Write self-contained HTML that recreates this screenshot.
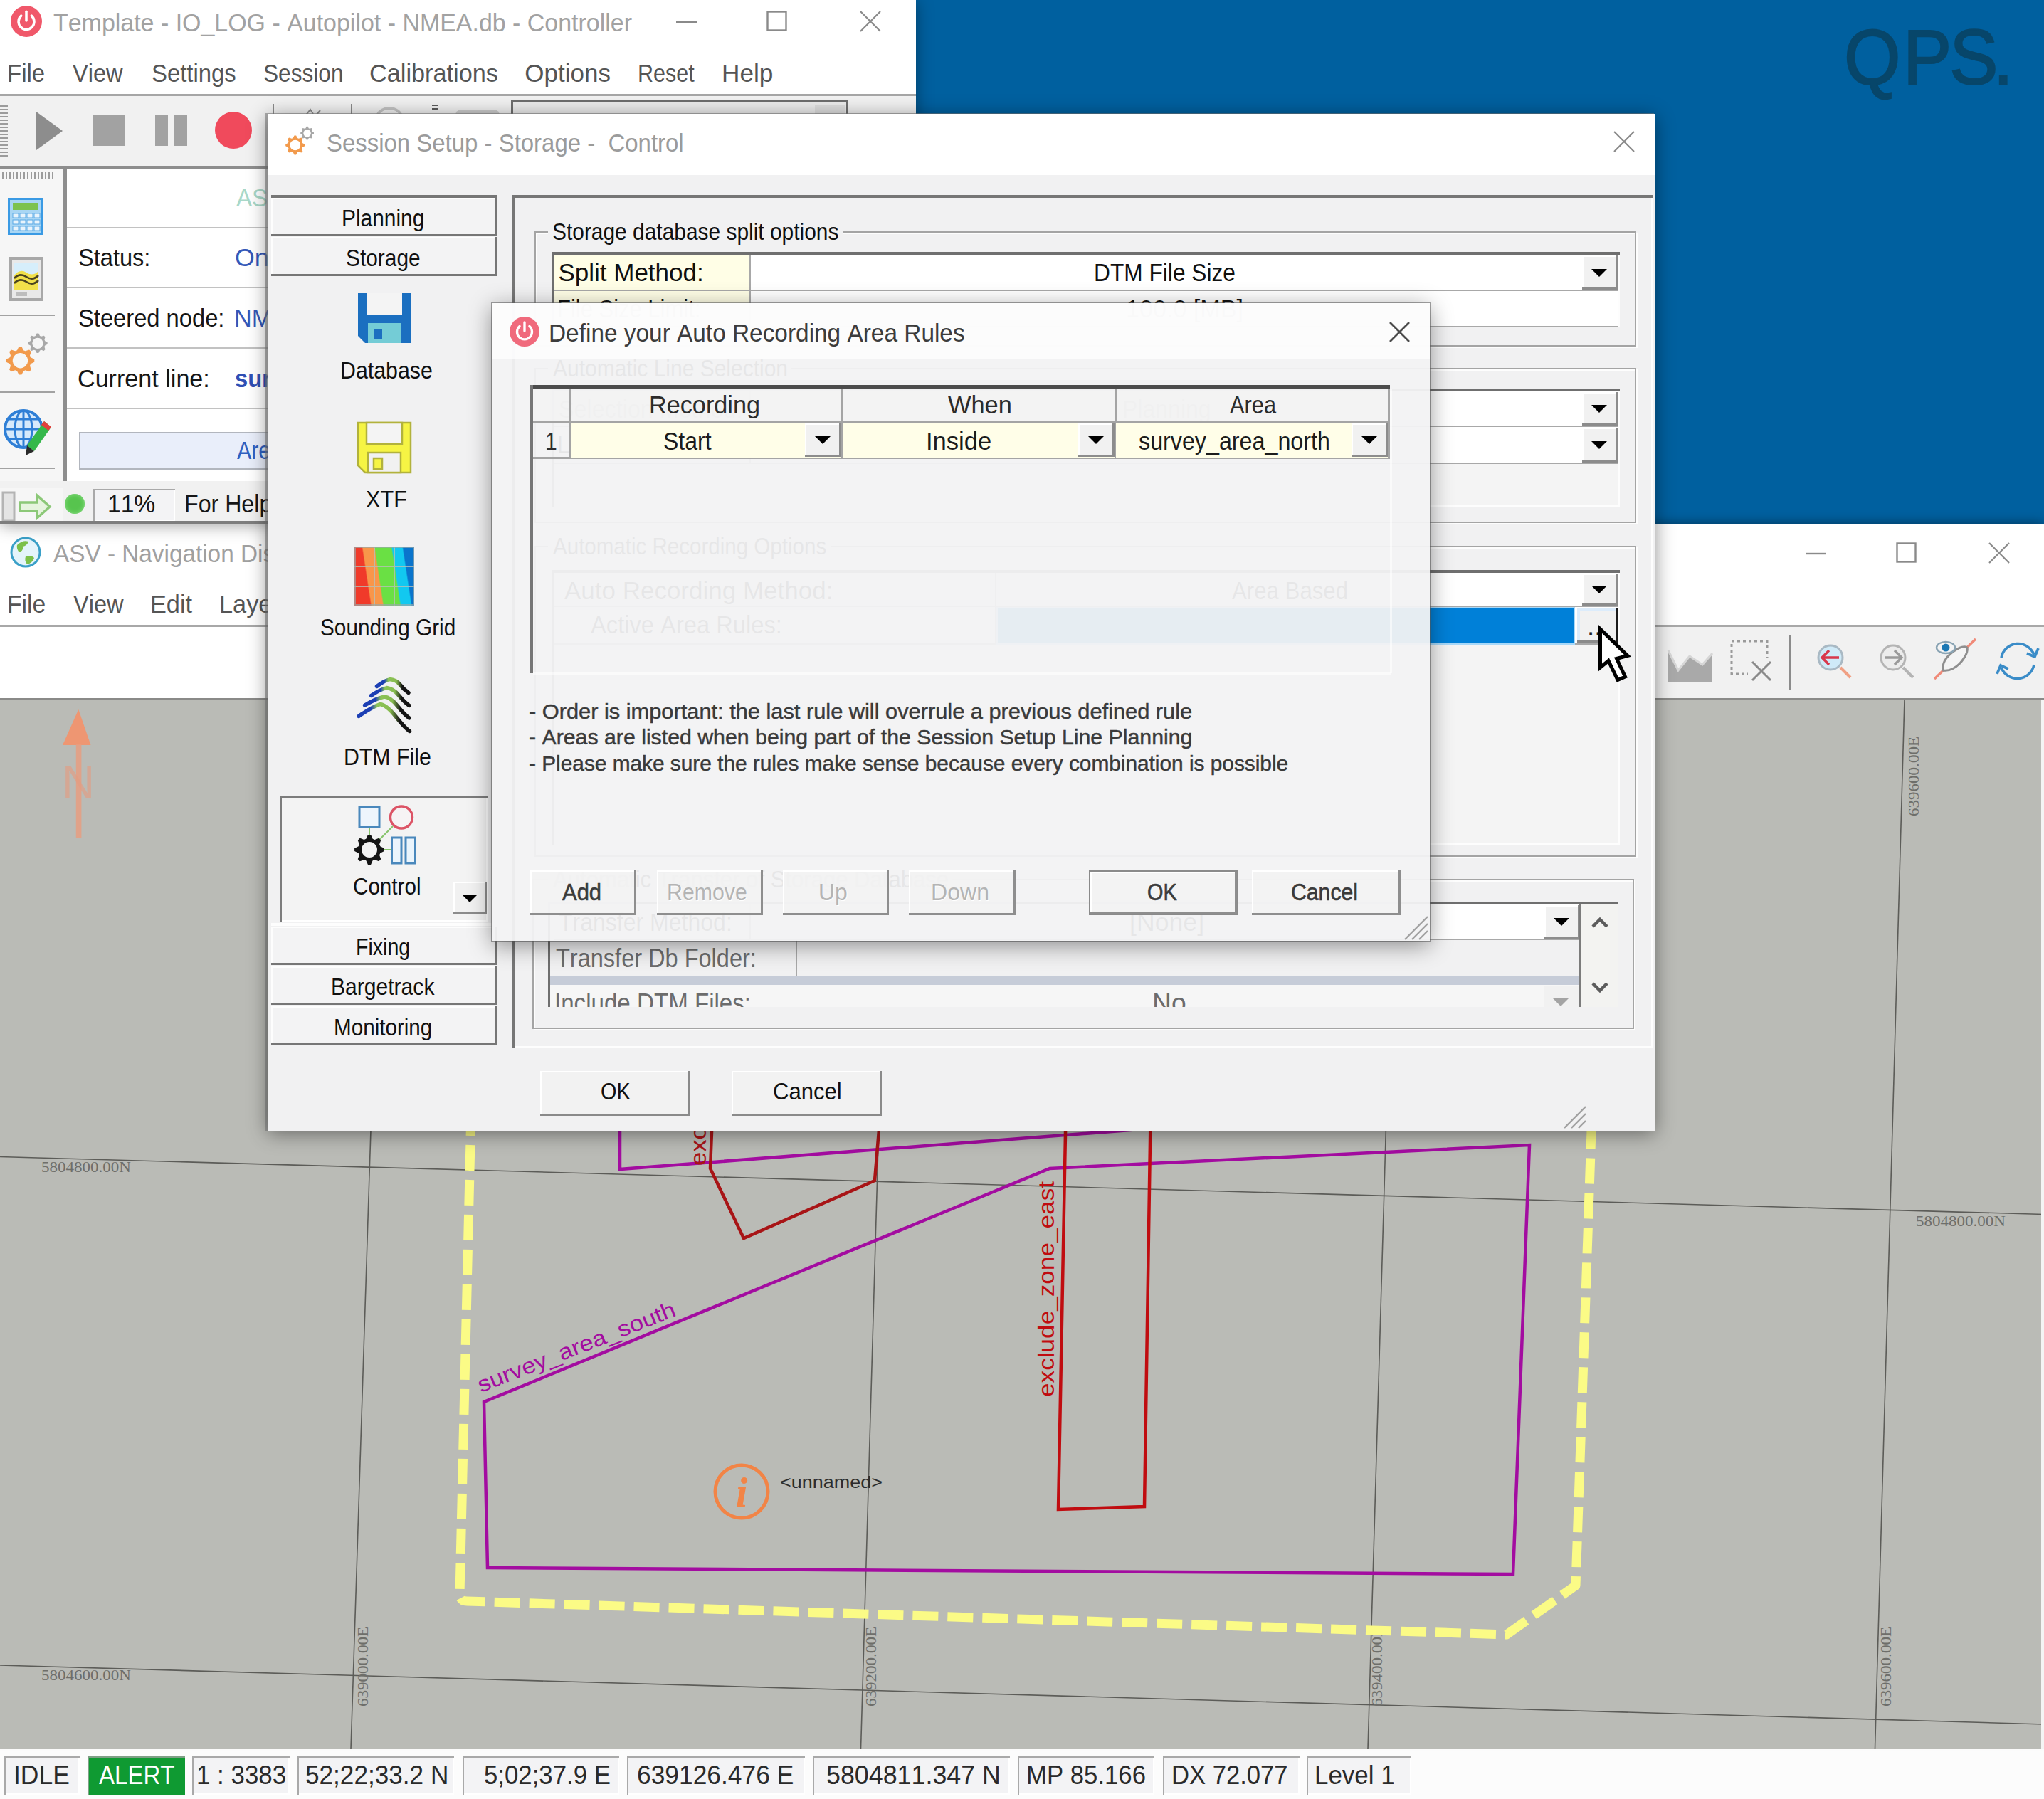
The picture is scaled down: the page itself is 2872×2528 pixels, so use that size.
<!DOCTYPE html>
<html lang="en">
<head>
<meta charset="utf-8">
<title>Session Setup - Storage - Control</title>
<style>
html,body{margin:0;padding:0;background:#fff;}
body{width:2872px;height:2528px;overflow:hidden;}
#root{position:relative;width:2872px;height:2528px;overflow:hidden;background:#fff;
 font-family:"Liberation Sans",sans-serif;font-kerning:none;}
.a{position:absolute;box-sizing:border-box;}
.t{position:absolute;white-space:pre;line-height:1;transform-origin:0 0;}
svg{overflow:visible;}
</style>
</head>
<body>
<div id="root">
<div id="desktop">
<div class="a" style="left:1287px;top:0px;width:1585px;height:736px;background:#00609f;"></div>
<span class="t" id="logo" style="left:2591.26px;top:24.88px;font-size:110px;color:#07466a;-webkit-text-stroke:2.2px #07466a;transform:scaleX(0.93);"><span style="letter-spacing:3.79px">Q</span><span style="letter-spacing:-3.44px">P</span><span style="letter-spacing:-7.35px">S</span>.</span>
</div>
<div id="nav-window">
<div class="a" style="left:0px;top:736px;width:2872px;height:1792px;background:#ffffff;box-shadow:0 0 16px rgba(0,0,0,.45);"></div>
<svg class="a" style="left:14px;top:754px;" width="44" height="44" viewBox="0 0 44 44" ><circle cx="22" cy="22" r="20" fill="#e4f4fb" stroke="#3aa0c8" stroke-width="3"/><path d="M10 12 q8 -8 16 -5 q-2 6 -8 7 q1 6 -5 8 q-4 -4 -3 -10z" fill="#7cc04a"/><path d="M22 28 q8 -3 12 2 q-3 8 -10 9 q-4 -5 -2 -11z" fill="#7cc04a"/></svg>
<span class="t" style="left:74.93px;top:760.37px;font-size:35px;color:#a0a0a0;transform:scaleX(0.9518);">ASV - Navigation Display</span>
<svg class="a" style="left:2537px;top:763px;" width="28" height="28" viewBox="0 0 28 28" ><path d="M0 15 H28" stroke="#8a8a8a" stroke-width="2.4" fill="none"/></svg>
<svg class="a" style="left:2664px;top:762px;" width="30" height="30" viewBox="0 0 30 30" ><rect x="1.5" y="1.5" width="26" height="26" fill="none" stroke="#8a8a8a" stroke-width="2.4"/></svg>
<svg class="a" style="left:2794px;top:762px;" width="30" height="30" viewBox="0 0 30 30" ><path d="M1 1 L29 29 M29 1 L1 29" stroke="#8a8a8a" stroke-width="2.2" fill="none"/></svg>
<span class="t" style="left:10.24px;top:831.37px;font-size:35px;color:#555555;transform:scaleX(0.9620);">File</span>
<span class="t" style="left:102.87px;top:831.37px;font-size:35px;color:#555555;transform:scaleX(0.9311);">View</span>
<span class="t" style="left:211.19px;top:831.37px;font-size:35px;color:#555555;transform:scaleX(0.9792);">Edit</span>
<span class="t" style="left:308.18px;top:831.37px;font-size:35px;color:#555555;transform:scaleX(0.9811);">Layers</span>
<div class="a" style="left:0px;top:878px;width:2872px;height:3px;background:#a8a8a8;"></div>
<div class="a" style="left:0px;top:881px;width:2872px;height:100px;background:#f1f1f1;"></div>
<div class="a" style="left:0px;top:881px;width:400px;height:100px;background:#ffffff;"></div>
<svg class="a" style="left:2340px;top:896px;" width="70" height="66" viewBox="0 0 70 66" ><path d="M4 4 V62 H66 V22 L52 38 L34 26 L18 46 L4 18 Z" fill="#a9a9a9"/><path d="M4 18 L18 46 L34 26 L52 38 L66 22" fill="none" stroke="#d6d6d6" stroke-width="3"/></svg>
<svg class="a" style="left:2430px;top:898px;" width="64" height="62" viewBox="0 0 64 62" ><rect x="3" y="3" width="50" height="46" fill="none" stroke="#9a9a9a" stroke-width="3" stroke-dasharray="4 4"/><rect x="26" y="26" width="38" height="36" fill="#f1f1f1"/><path d="M32 32 L58 58 M58 32 L32 58" stroke="#8a8a8a" stroke-width="3" fill="none"/></svg>
<div class="a" style="left:2514px;top:892px;width:2px;height:77px;background:#8c8c8c;"></div>
<svg class="a" style="left:2548px;top:900px;" width="60" height="60" viewBox="0 0 60 60" ><circle cx="24" cy="24" r="17" fill="#cfeaf8" stroke="#a9b9c4" stroke-width="3"/><path d="M38 38 L52 52" stroke="#f0a084" stroke-width="4"/><path d="M36 24 H13 M22 14 L12 24 L22 34" stroke="#d8384c" stroke-width="3.4" fill="none"/></svg>
<svg class="a" style="left:2636px;top:900px;" width="60" height="60" viewBox="0 0 60 60" ><circle cx="24" cy="24" r="17" fill="#ececec" stroke="#b4b4b4" stroke-width="3"/><path d="M38 38 L52 52" stroke="#b4b4b4" stroke-width="4"/><path d="M12 24 H35 M26 14 L36 24 L26 34" stroke="#9a9a9a" stroke-width="3.4" fill="none"/></svg>
<svg class="a" style="left:2710px;top:892px;" width="70" height="72" viewBox="0 0 70 72" ><path d="M8 62 L66 6" stroke="#f08a78" stroke-width="3.4"/><path d="M20 50 Q18 36 34 24 Q48 14 54 18 Q56 26 44 40 Q32 52 20 50 Z" fill="#f4f4f4" stroke="#8f8f8f" stroke-width="3"/><ellipse cx="24" cy="18" rx="13" ry="8" fill="#f4f4f4" stroke="#8aa4b4" stroke-width="2.4"/><circle cx="24" cy="18" r="5.5" fill="#1b78b4"/></svg>
<svg class="a" style="left:2802px;top:896px;" width="66" height="66" viewBox="0 0 66 66" ><path d="M10 28 A24 24 0 0 1 56 24" fill="none" stroke="#3a8cc8" stroke-width="3.6"/><path d="M56 38 A24 24 0 0 1 10 42" fill="none" stroke="#3a8cc8" stroke-width="3.6"/><path d="M46 22 L57 27 L62 15" fill="none" stroke="#3a8cc8" stroke-width="3.6"/><path d="M20 44 L9 39 L4 51" fill="none" stroke="#3a8cc8" stroke-width="3.6"/></svg>
<div class="a" style="left:0px;top:981px;width:2872px;height:4.5px;background:#8a8a88;"></div>
<div class="a" style="left:0px;top:983px;width:2872px;height:1475px;background:#babbb6;"></div>
<svg class="a" id="map" style="left:0;top:983px" width="2872" height="1475" viewBox="0 983 2872 1475" font-family="'Liberation Sans',sans-serif"><line x1="0" y1="1625.5" x2="2872" y2="1706.5" stroke="#5c5c58" stroke-width="1.6"/><line x1="0" y1="2340" x2="2872" y2="2423" stroke="#5c5c58" stroke-width="1.6"/><line x1="540.5" y1="983" x2="493" y2="2458" stroke="#5c5c58" stroke-width="1.6"/><line x1="1252" y1="983" x2="1209.5" y2="2458" stroke="#5c5c58" stroke-width="1.6"/><line x1="1965" y1="983" x2="1922" y2="2458" stroke="#5c5c58" stroke-width="1.6"/><line x1="2676" y1="983" x2="2634.5" y2="2458" stroke="#5c5c58" stroke-width="1.6"/><text x="58" y="1647" textLength="126" lengthAdjust="spacingAndGlyphs" style="font-family:'Liberation Serif',serif;font-size:21px;fill:#6e6e6a">5804800.00N</text><text x="58" y="2361" textLength="126" lengthAdjust="spacingAndGlyphs" style="font-family:'Liberation Serif',serif;font-size:21px;fill:#6e6e6a">5804600.00N</text><text x="2692" y="1723" textLength="126" lengthAdjust="spacingAndGlyphs" style="font-family:'Liberation Serif',serif;font-size:21px;fill:#6e6e6a">5804800.00N</text><text transform="translate(517 2398) rotate(-90)" textLength="112" lengthAdjust="spacingAndGlyphs" style="font-family:'Liberation Serif',serif;font-size:21px;fill:#6e6e6a">639000.00E</text><text transform="translate(1231 2398) rotate(-90)" textLength="112" lengthAdjust="spacingAndGlyphs" style="font-family:'Liberation Serif',serif;font-size:21px;fill:#6e6e6a">639200.00E</text><text transform="translate(1942 2398) rotate(-90)" textLength="112" lengthAdjust="spacingAndGlyphs" style="font-family:'Liberation Serif',serif;font-size:21px;fill:#6e6e6a">639400.00E</text><text transform="translate(2657 2398) rotate(-90)" textLength="112" lengthAdjust="spacingAndGlyphs" style="font-family:'Liberation Serif',serif;font-size:21px;fill:#6e6e6a">639600.00E</text><text transform="translate(2696 1147) rotate(-90)" textLength="112" lengthAdjust="spacingAndGlyphs" style="font-family:'Liberation Serif',serif;font-size:21px;fill:#6e6e6a">639600.00E</text><path d="M662 1560 L646 2240 Q646 2250 656 2250 L2117 2297 L2214 2228 L2237 1560" fill="none" stroke="#fbfb86" stroke-width="13" stroke-dasharray="36 13" stroke-linejoin="round"/><path d="M871 1540 L871 1643 L1640 1584" fill="none" stroke="#a30ca0" stroke-width="4.5"/><path d="M680 1970 L685 2203 L2126 2212 L2149 1609 L1475 1642 Z" fill="none" stroke="#a30ca0" stroke-width="4.5" stroke-linejoin="miter"/><path d="M1002 1540 L998 1642 L1045 1740 L1229 1659 L1239 1540" fill="none" stroke="#a81416" stroke-width="4.5"/><path d="M1498 1540 L1487 2121 L1608 2117 L1617 1540" fill="none" stroke="#c00c10" stroke-width="4.5"/><text transform="translate(676 1957) rotate(-21.5)" textLength="296" lengthAdjust="spacingAndGlyphs" style="font-size:31px;fill:#a30ca0">survey_area_south</text><text transform="translate(1481 1963) rotate(-90)" textLength="303" lengthAdjust="spacingAndGlyphs" style="font-size:31px;fill:#c00c10">exclude_zone_east</text><text transform="translate(992 1638) rotate(-90)" textLength="303" lengthAdjust="spacingAndGlyphs" style="font-size:31px;fill:#a81416">exclude_zone_west</text><circle cx="1042" cy="2096" r="37" fill="none" stroke="#f28446" stroke-width="5"/><text x="1042" y="2117" text-anchor="middle" style="font-family:'Liberation Serif',serif;font-style:italic;font-weight:700;font-size:60px;fill:#f28446">i</text><text x="1096" y="2091" textLength="144" lengthAdjust="spacingAndGlyphs" style="font-size:24px;fill:#2c2c2c">&lt;unnamed&gt;</text><path d="M110.3 997 L127.5 1047 H88 Z" fill="#ee9672"/><rect x="106.8" y="1046" width="7.6" height="131" fill="#ea9c7e" opacity="0.8"/><text x="87" y="1120.5" textLength="46" lengthAdjust="spacingAndGlyphs" style="font-size:64px;fill:#e69c80" opacity="0.62">N</text></svg>
<div class="a" style="left:2868px;top:983px;width:4px;height:1475px;background:#f4f4f4;"></div>
<div class="a" style="left:0px;top:2458px;width:2872px;height:70px;background:#fcfcfc;"></div>
<div class="a" style="left:0px;top:2458px;width:2872px;height:3px;background:#fbfbfb;"></div>
<div class="a" style="left:6px;top:2468px;width:106px;height:54px;background:#f3f3f5;box-shadow:inset 2px 2px 0 #a9a9a9,inset -2px -2px 0 #ffffff;"></div>
<span class="t" style="left:18.74px;top:2476.53px;font-size:36px;color:#2a2a2a;transform:scaleX(0.9840);">IDLE</span>
<div class="a" style="left:123px;top:2468px;width:137px;height:54px;background:#0f9a32;box-shadow:inset 2px 2px 0 #7f9f86;"></div>
<span class="t" style="left:138.93px;top:2476.53px;font-size:36px;color:#ffffff;transform:scaleX(0.9172);">ALERT</span>
<div class="a" style="left:270px;top:2468px;width:137px;height:54px;background:#f3f3f5;box-shadow:inset 2px 2px 0 #a9a9a9,inset -2px -2px 0 #ffffff;"></div>
<span class="t" style="left:276.35px;top:2476.53px;font-size:36px;color:#2a2a2a;transform:scaleX(0.9696);">1 : 3383</span>
<div class="a" style="left:418px;top:2468px;width:220px;height:54px;background:#f3f3f5;box-shadow:inset 2px 2px 0 #a9a9a9,inset -2px -2px 0 #ffffff;"></div>
<span class="t" style="left:428.59px;top:2476.53px;font-size:36px;color:#2a2a2a;transform:scaleX(0.9763);">52;22;33.2 N</span>
<div class="a" style="left:650px;top:2468px;width:220px;height:54px;background:#f3f3f5;box-shadow:inset 2px 2px 0 #a9a9a9,inset -2px -2px 0 #ffffff;"></div>
<span class="t" style="left:679.61px;top:2476.53px;font-size:36px;color:#2a2a2a;transform:scaleX(0.9658);">5;02;37.9 E</span>
<div class="a" style="left:881px;top:2468px;width:250px;height:54px;background:#f3f3f5;box-shadow:inset 2px 2px 0 #a9a9a9,inset -2px -2px 0 #ffffff;"></div>
<span class="t" style="left:895.23px;top:2476.53px;font-size:36px;color:#2a2a2a;transform:scaleX(0.9824);">639126.476 E</span>
<div class="a" style="left:1142px;top:2468px;width:277px;height:54px;background:#f3f3f5;box-shadow:inset 2px 2px 0 #a9a9a9,inset -2px -2px 0 #ffffff;"></div>
<span class="t" style="left:1160.57px;top:2476.53px;font-size:36px;color:#2a2a2a;transform:scaleX(0.9950);">5804811.347 N</span>
<div class="a" style="left:1430px;top:2468px;width:192px;height:54px;background:#f3f3f5;box-shadow:inset 2px 2px 0 #a9a9a9,inset -2px -2px 0 #ffffff;"></div>
<span class="t" style="left:1442.15px;top:2476.53px;font-size:36px;color:#2a2a2a;transform:scaleX(0.9648);">MP 85.166</span>
<div class="a" style="left:1634px;top:2468px;width:192px;height:54px;background:#f3f3f5;box-shadow:inset 2px 2px 0 #a9a9a9,inset -2px -2px 0 #ffffff;"></div>
<span class="t" style="left:1646.16px;top:2476.53px;font-size:36px;color:#2a2a2a;transform:scaleX(0.9616);">DX 72.077</span>
<div class="a" style="left:1836px;top:2468px;width:147px;height:54px;background:#f3f3f5;box-shadow:inset 2px 2px 0 #a9a9a9,inset -2px -2px 0 #ffffff;"></div>
<span class="t" style="left:1847.14px;top:2476.53px;font-size:36px;color:#2a2a2a;transform:scaleX(0.9696);">Level 1</span>
</div>
<div id="controller-window">
<div class="a" style="left:0px;top:0px;width:1287px;height:736px;background:#ffffff;box-shadow:0 2px 22px rgba(0,0,0,.38);"></div>
<svg class="a" style="left:15px;top:8px;" width="44" height="44" viewBox="0 0 44 44" ><circle cx="22" cy="22" r="22" fill="#f0586a"/><path d="M14.74 14.08 A11 11 0 1 0 29.26 14.08" fill="none" stroke="#fff" stroke-width="3.52" stroke-linecap="round"/><path d="M22 8.36 V20.9" stroke="#fff" stroke-width="3.52" stroke-linecap="round"/></svg>
<span class="t" style="left:75.25px;top:14.37px;font-size:35px;color:#a2a2a2;transform:scaleX(0.9697);">Template - IO_LOG - Autopilot - NMEA.db - Controller</span>
<svg class="a" style="left:950px;top:16px;" width="30" height="30" viewBox="0 0 30 30" ><path d="M0 15 H29" stroke="#8a8a8a" stroke-width="2.4"/></svg>
<svg class="a" style="left:1077px;top:15px;" width="30" height="30" viewBox="0 0 30 30" ><rect x="1.5" y="1.5" width="26" height="26" fill="none" stroke="#8a8a8a" stroke-width="2.4"/></svg>
<svg class="a" style="left:1208px;top:15px;" width="30" height="30" viewBox="0 0 30 30" ><path d="M1 1 L29 29 M29 1 L1 29" stroke="#8a8a8a" stroke-width="2.2" fill="none"/></svg>
<span class="t" style="left:10.29px;top:84.87px;font-size:35px;color:#555555;transform:scaleX(0.9428);">File</span>
<span class="t" style="left:101.87px;top:84.87px;font-size:35px;color:#555555;transform:scaleX(0.9311);">View</span>
<span class="t" style="left:212.52px;top:84.87px;font-size:35px;color:#555555;transform:scaleX(0.9384);">Settings</span>
<span class="t" style="left:369.58px;top:84.87px;font-size:35px;color:#555555;transform:scaleX(0.9032);">Session</span>
<span class="t" style="left:519.29px;top:84.87px;font-size:35px;color:#555555;transform:scaleX(0.9792);">Calibrations</span>
<span class="t" style="left:737.35px;top:84.87px;font-size:35px;color:#555555;">Options</span>
<span class="t" style="left:895.5px;top:84.87px;font-size:35px;color:#555555;transform:scaleX(0.8720);">Reset</span>
<span class="t" style="left:1014.12px;top:84.87px;font-size:35px;color:#555555;transform:scaleX(1.0046);">Help</span>
<div class="a" style="left:0px;top:132px;width:1287px;height:3px;background:#a6a6a6;"></div>
<div class="a" style="left:0px;top:135px;width:1287px;height:100px;background:#f1f1f1;"></div>
<svg class="a" style="left:0px;top:148px;" width="12" height="74" viewBox="0 0 12 74" ><rect x="0" y="0" width="11" height="2" fill="#9c9c9c"/><rect x="0" y="5" width="11" height="2" fill="#9c9c9c"/><rect x="0" y="10" width="11" height="2" fill="#9c9c9c"/><rect x="0" y="15" width="11" height="2" fill="#9c9c9c"/><rect x="0" y="20" width="11" height="2" fill="#9c9c9c"/><rect x="0" y="25" width="11" height="2" fill="#9c9c9c"/><rect x="0" y="30" width="11" height="2" fill="#9c9c9c"/><rect x="0" y="35" width="11" height="2" fill="#9c9c9c"/><rect x="0" y="40" width="11" height="2" fill="#9c9c9c"/><rect x="0" y="45" width="11" height="2" fill="#9c9c9c"/><rect x="0" y="50" width="11" height="2" fill="#9c9c9c"/><rect x="0" y="55" width="11" height="2" fill="#9c9c9c"/><rect x="0" y="60" width="11" height="2" fill="#9c9c9c"/><rect x="0" y="65" width="11" height="2" fill="#9c9c9c"/><rect x="0" y="70" width="11" height="2" fill="#9c9c9c"/></svg>
<svg class="a" style="left:50px;top:156px;" width="40" height="56" viewBox="0 0 40 56" ><path d="M1 1 L38 28 L1 55 Z" fill="#8d8d8d"/></svg>
<div class="a" style="left:130px;top:161px;width:46px;height:44px;background:#a2a2a2;"></div>
<div class="a" style="left:218px;top:161px;width:18px;height:44px;background:#a2a2a2;"></div>
<div class="a" style="left:244px;top:161px;width:19px;height:44px;background:#a2a2a2;"></div>
<div class="a" style="left:302px;top:157px;width:52px;height:52px;background:#f04a5c;border-radius:50%;"></div>
<div class="a" style="left:383px;top:146px;width:2px;height:30px;background:#8a8a8a;"></div>
<div class="a" style="left:493px;top:146px;width:2px;height:30px;background:#8a8a8a;"></div>
<svg class="a" style="left:424px;top:150px;" width="30" height="14" viewBox="0 0 30 14" ><path d="M4 14 L12 4 L16 10 M20 12 L26 5" stroke="#8c8c8c" stroke-width="2" fill="none"/></svg>
<div class="a" style="left:528px;top:150px;width:38px;height:30px;border:4px solid #c4c4c4;border-radius:50%;"></div>
<div class="a" style="left:607px;top:147px;width:9px;height:2px;background:#5a5a5a;"></div>
<div class="a" style="left:607px;top:152px;width:9px;height:2px;background:#5a5a5a;"></div>
<div class="a" style="left:640px;top:154px;width:62px;height:20px;background:#cdcdcd;border-radius:8px;"></div>
<div class="a" style="left:718px;top:141px;width:474px;height:60px;background:#ececec;border:3px solid #6e6e6e;box-sizing:border-box;"></div>
<div class="a" style="left:1145px;top:147px;width:42px;height:52px;background:#dedede;"></div>
<div class="a" style="left:0px;top:233px;width:1287px;height:4px;background:#8e8e8e;"></div>
<div class="a" style="left:0px;top:237px;width:88px;height:450px;background:#f6f6f6;"></div>
<svg class="a" style="left:3px;top:242px;" width="74" height="10" viewBox="0 0 74 10" ><rect x="0" y="0" width="2" height="10" fill="#9c9c9c"/><rect x="5" y="0" width="2" height="10" fill="#9c9c9c"/><rect x="10" y="0" width="2" height="10" fill="#9c9c9c"/><rect x="15" y="0" width="2" height="10" fill="#9c9c9c"/><rect x="20" y="0" width="2" height="10" fill="#9c9c9c"/><rect x="25" y="0" width="2" height="10" fill="#9c9c9c"/><rect x="30" y="0" width="2" height="10" fill="#9c9c9c"/><rect x="35" y="0" width="2" height="10" fill="#9c9c9c"/><rect x="40" y="0" width="2" height="10" fill="#9c9c9c"/><rect x="45" y="0" width="2" height="10" fill="#9c9c9c"/><rect x="50" y="0" width="2" height="10" fill="#9c9c9c"/><rect x="55" y="0" width="2" height="10" fill="#9c9c9c"/><rect x="60" y="0" width="2" height="10" fill="#9c9c9c"/><rect x="65" y="0" width="2" height="10" fill="#9c9c9c"/><rect x="70" y="0" width="2" height="10" fill="#9c9c9c"/></svg>
<svg class="a" style="left:11px;top:278px;" width="50" height="52" viewBox="0 0 50 52" ><rect x="1.5" y="1.5" width="47" height="49" fill="#a8d6f4" stroke="#3a9ae4" stroke-width="3"/><rect x="7" y="7" width="36" height="10" fill="#7cc24e"/><rect x="7" y="22" width="8" height="6" fill="#e8f4fc" stroke="#5aaae6" stroke-width="1"/><rect x="17" y="22" width="8" height="6" fill="#e8f4fc" stroke="#5aaae6" stroke-width="1"/><rect x="27" y="22" width="8" height="6" fill="#e8f4fc" stroke="#5aaae6" stroke-width="1"/><rect x="37" y="22" width="8" height="6" fill="#e8f4fc" stroke="#5aaae6" stroke-width="1"/><rect x="7" y="31" width="8" height="6" fill="#e8f4fc" stroke="#5aaae6" stroke-width="1"/><rect x="17" y="31" width="8" height="6" fill="#e8f4fc" stroke="#5aaae6" stroke-width="1"/><rect x="27" y="31" width="8" height="6" fill="#e8f4fc" stroke="#5aaae6" stroke-width="1"/><rect x="37" y="31" width="8" height="6" fill="#e8f4fc" stroke="#5aaae6" stroke-width="1"/><rect x="7" y="40" width="8" height="6" fill="#e8f4fc" stroke="#5aaae6" stroke-width="1"/><rect x="17" y="40" width="8" height="6" fill="#e8f4fc" stroke="#5aaae6" stroke-width="1"/><rect x="27" y="40" width="8" height="6" fill="#e8f4fc" stroke="#5aaae6" stroke-width="1"/><rect x="37" y="40" width="8" height="6" fill="#e8f4fc" stroke="#5aaae6" stroke-width="1"/></svg>
<svg class="a" style="left:13px;top:361px;" width="48" height="62" viewBox="0 0 48 62" ><rect x="2" y="2" width="44" height="58" fill="#e9e9e9" stroke="#a8a8a8" stroke-width="4"/><rect x="7" y="8" width="34" height="20" fill="#d6eefb"/><path d="M7 26 q8 -10 17 -4 q9 6 17 -2 V46 H7 Z" fill="#f1e04a"/><path d="M7 30 q8 -8 17 -2 q9 6 17 -2 M7 37 q8 -8 17 -2 q9 6 17 -2" fill="none" stroke="#4a4420" stroke-width="2.6"/><rect x="9" y="50" width="16" height="5" fill="#bdbdbd"/></svg>
<div class="a" style="left:0px;top:442px;width:77px;height:2.4px;background:#a2a2a2;"></div>
<svg class="a" style="left:4px;top:466px;" width="65.28" height="61.2" viewBox="0 0 64 60" ><path d="M43.41 38.09 L43.41 41.91 L38.35 44.35 L37.23 47.07 L39.07 52.37 L36.37 55.07 L31.07 53.23 L28.35 54.35 L25.91 59.41 L22.09 59.41 L19.65 54.35 L16.93 53.23 L11.63 55.07 L8.93 52.37 L10.77 47.07 L9.65 44.35 L4.59 41.91 L4.59 38.09 L9.65 35.65 L10.77 32.93 L8.93 27.63 L11.63 24.93 L16.93 26.77 L19.65 25.65 L22.09 20.59 L25.91 20.59 L28.35 25.65 L31.07 26.77 L36.37 24.93 L39.07 27.63 L37.23 32.93 L38.35 35.65 Z M13.5 40 a10.5 10.5 0 1 0 21 0 a10.5 10.5 0 1 0 -21 0 Z" fill="#f29a4c" fill-rule="evenodd"/><path d="M61.43 14.68 L61.43 17.32 L58.05 19.05 L57.26 20.95 L58.44 24.56 L56.56 26.44 L52.95 25.26 L51.05 26.05 L49.32 29.43 L46.68 29.43 L44.95 26.05 L43.05 25.26 L39.44 26.44 L37.56 24.56 L38.74 20.95 L37.95 19.05 L34.57 17.32 L34.57 14.68 L37.95 12.95 L38.74 11.05 L37.56 7.44 L39.44 5.56 L43.05 6.74 L44.95 5.95 L46.68 2.57 L49.32 2.57 L51.05 5.95 L52.95 6.74 L56.56 5.56 L58.44 7.44 L57.26 11.05 L58.05 12.95 Z M40.5 16 a7.5 7.5 0 1 0 15 0 a7.5 7.5 0 1 0 -15 0 Z" fill="#a8a8a8" fill-rule="evenodd"/></svg>
<div class="a" style="left:0px;top:550px;width:77px;height:2.4px;background:#a2a2a2;"></div>
<svg class="a" style="left:4px;top:574px;" width="70" height="70" viewBox="0 0 70 70" ><circle cx="29" cy="29" r="26" fill="#d6e9fb" stroke="#2f7fd6" stroke-width="4"/><path d="M29 3 V55 M3 29 H55 M8 15 H50 M8 43 H50" stroke="#2f7fd6" stroke-width="3" fill="none"/><ellipse cx="29" cy="29" rx="12" ry="26" fill="none" stroke="#2f7fd6" stroke-width="3"/><path d="M58 18 L68 26 L44 60 L34 52 Z" fill="#35b84a"/><path d="M58 18 L68 26 L64 31 L54 23 Z" fill="#e2403c"/><path d="M34 52 L44 60 L32 66 Z" fill="#2a2a2a"/></svg>
<div class="a" style="left:0px;top:657px;width:77px;height:2.4px;background:#a2a2a2;"></div>
<div class="a" style="left:88px;top:237px;width:1px;height:500px;background:#d8d8d8;"></div>
<div class="a" style="left:89px;top:237px;width:5px;height:440px;background:#8e8e8e;"></div>
<div class="a" style="left:94px;top:237px;width:1193px;height:438px;background:#ffffff;"></div>
<div class="a" style="left:94px;top:319px;width:1193px;height:2.4px;background:#c2c2c2;"></div>
<div class="a" style="left:94px;top:403px;width:1193px;height:2.4px;background:#c2c2c2;"></div>
<div class="a" style="left:94px;top:488px;width:1193px;height:2.4px;background:#c2c2c2;"></div>
<div class="a" style="left:94px;top:573px;width:1193px;height:2.4px;background:#c2c2c2;"></div>
<span class="t" style="left:331.93px;top:259.87px;font-size:35px;color:#a9d8c8;transform:scaleX(0.9452);">ASV</span>
<span class="t" style="left:109.53px;top:344.37px;font-size:35px;color:#161616;transform:scaleX(0.9309);">Status:</span>
<span class="t" style="left:330.32px;top:344.37px;font-size:35px;color:#3458b8;transform:scaleX(1.0208);">Online</span>
<span class="t" style="left:109.53px;top:428.87px;font-size:35px;color:#161616;transform:scaleX(0.9343);">Steered node:</span>
<span class="t" style="left:329.19px;top:428.87px;font-size:35px;color:#3458b8;transform:scaleX(0.9778);">NMEA</span>
<span class="t" style="left:109.29px;top:513.87px;font-size:35px;color:#161616;transform:scaleX(0.9746);">Current line:</span>
<span class="t" style="left:329.86px;top:513.87px;font-size:35px;color:#2f4fb4;font-weight:700;transform:scaleX(0.9332);">survey</span>
<div class="a" style="left:111px;top:607px;width:1100px;height:53px;background:#e9eefa;border:2px solid #b2b6be;box-sizing:border-box;"></div>
<span class="t" style="left:332.94px;top:615.37px;font-size:35px;color:#3060c0;transform:scaleX(0.8662);">Area</span>
<div class="a" style="left:0px;top:676px;width:1287px;height:58px;background:#f1f1f1;"></div>
<div class="a" style="left:88px;top:688px;width:1px;height:44px;background:#c8c8c8;"></div>
<div class="a" style="left:91px;top:694px;width:28px;height:28px;background:#57c44e;border-radius:50%;box-shadow:inset 0 0 6px #8fe08a;"></div>
<div class="a" style="left:131px;top:687px;width:115px;height:46px;background:#f3f3f5;box-shadow:inset 2px 2px 0 #a9a9a9,inset -2px -2px 0 #fff;"></div>
<span class="t" style="left:151.45px;top:690.37px;font-size:35px;color:#161616;transform:scaleX(0.9597);">11%</span>
<span class="t" style="left:259.36px;top:690.37px;font-size:35px;color:#161616;transform:scaleX(0.9185);">For Help, press F1</span>
<div class="a" style="left:0px;top:686px;width:88px;height:48px;background:#f6f6f6;"></div>
<svg class="a" style="left:2px;top:690px;" width="86" height="44" viewBox="0 0 86 44" ><rect x="2" y="2" width="16" height="40" fill="#e4e4e4" stroke="#b4b4b4" stroke-width="3"/><path d="M26 16 H50 V6 L68 22 L50 38 V28 H26 Z" fill="#e6f4de" stroke="#8cc878" stroke-width="3.4"/></svg>
<div class="a" style="left:0px;top:732px;width:1287px;height:4px;background:#7e7e7e;"></div>
</div>
<div id="session-setup">
<div class="a" style="left:376px;top:160px;width:1949px;height:1429px;background:#f1f1f2;box-shadow:0 4px 26px rgba(0,0,0,.45),-2px 0 0 1px rgba(130,130,130,.6);"></div>
<div class="a" style="left:376px;top:160px;width:1949px;height:86px;background:#ffffff;"></div>
<svg class="a" style="left:398px;top:176px;" width="44.8" height="42" viewBox="0 0 64 60" ><path d="M43.41 38.09 L43.41 41.91 L38.35 44.35 L37.23 47.07 L39.07 52.37 L36.37 55.07 L31.07 53.23 L28.35 54.35 L25.91 59.41 L22.09 59.41 L19.65 54.35 L16.93 53.23 L11.63 55.07 L8.93 52.37 L10.77 47.07 L9.65 44.35 L4.59 41.91 L4.59 38.09 L9.65 35.65 L10.77 32.93 L8.93 27.63 L11.63 24.93 L16.93 26.77 L19.65 25.65 L22.09 20.59 L25.91 20.59 L28.35 25.65 L31.07 26.77 L36.37 24.93 L39.07 27.63 L37.23 32.93 L38.35 35.65 Z M13.5 40 a10.5 10.5 0 1 0 21 0 a10.5 10.5 0 1 0 -21 0 Z" fill="#f29a4c" fill-rule="evenodd"/><path d="M61.43 14.68 L61.43 17.32 L58.05 19.05 L57.26 20.95 L58.44 24.56 L56.56 26.44 L52.95 25.26 L51.05 26.05 L49.32 29.43 L46.68 29.43 L44.95 26.05 L43.05 25.26 L39.44 26.44 L37.56 24.56 L38.74 20.95 L37.95 19.05 L34.57 17.32 L34.57 14.68 L37.95 12.95 L38.74 11.05 L37.56 7.44 L39.44 5.56 L43.05 6.74 L44.95 5.95 L46.68 2.57 L49.32 2.57 L51.05 5.95 L52.95 6.74 L56.56 5.56 L58.44 7.44 L57.26 11.05 L58.05 12.95 Z M40.5 16 a7.5 7.5 0 1 0 15 0 a7.5 7.5 0 1 0 -15 0 Z" fill="#a8a8a8" fill-rule="evenodd"/></svg>
<span class="t" style="left:458.52px;top:183.37px;font-size:35px;color:#9b9b9b;transform:scaleX(0.9411);">Session Setup - Storage -  Control</span>
<svg class="a" style="left:2267px;top:184px;" width="30" height="30" viewBox="0 0 30 30" ><path d="M1 1 L29 29 M29 1 L1 29" stroke="#8a8a8a" stroke-width="2.2" fill="none"/></svg>
<div class="a" style="left:381px;top:274px;width:317px;height:4px;background:#767676;"></div>
<div class="a b" style="left:381px;top:278px;width:317px;height:54px;background:#f3f3f4;box-shadow:inset -3px -3px 0 #767676,inset 2px 2px 0 #fdfdfd;"></div>
<span class="t" style="left:480.05px;top:288.72px;font-size:34px;color:#101010;transform:scaleX(0.8794);">Planning</span>
<div class="a b" style="left:381px;top:333px;width:317px;height:55px;background:#f3f3f4;box-shadow:inset -3px -3px 0 #767676,inset 2px 2px 0 #fdfdfd;"></div>
<span class="t" style="left:485.66px;top:345.22px;font-size:34px;color:#101010;transform:scaleX(0.8790);">Storage</span>
<svg class="a" style="left:501px;top:410px;" width="78" height="74" viewBox="0 0 78 74" ><path d="M2 2 H76 V72 H12 L2 62 Z" fill="#1b6fc0"/><rect x="14" y="2" width="50" height="30" fill="#f4f4f4"/><rect x="16" y="44" width="46" height="28" fill="#74ccd6"/><rect x="24" y="52" width="12" height="15" fill="#1b6fc0"/></svg>
<span class="t" style="left:477.51px;top:504.07px;font-size:33px;color:#101010;transform:scaleX(0.9189);">Database</span>
<svg class="a" style="left:501px;top:592px;" width="78" height="74" viewBox="0 0 78 74" ><path d="M2 2 H76 V72 H12 L2 62 Z" fill="#f6f444" stroke="#b2b23c" stroke-width="2.5"/><rect x="14" y="2" width="50" height="30" fill="#f4f4f4" stroke="#b2b23c" stroke-width="2.5"/><rect x="16" y="44" width="46" height="28" fill="#f1f1f1" stroke="#b2b23c" stroke-width="2.5"/><rect x="24" y="52" width="12" height="15" fill="#f6f444" stroke="#b2b23c" stroke-width="2.5"/></svg>
<span class="t" style="left:514.33px;top:685.07px;font-size:33px;color:#101010;transform:scaleX(0.9288);">XTF</span>
<svg class="a" style="left:498px;top:768px;" width="84" height="83" viewBox="0 0 84 83" ><defs><linearGradient id="sg" x1="0" y1="0.15" x2="1" y2="0"><stop offset="0" stop-color="#f03a2a"/><stop offset="0.14" stop-color="#f03a2a"/><stop offset="0.16" stop-color="#f8964a"/><stop offset="0.34" stop-color="#f8964a"/><stop offset="0.36" stop-color="#6ae044"/><stop offset="0.62" stop-color="#6ae044"/><stop offset="0.64" stop-color="#12c8f0"/><stop offset="0.80" stop-color="#12c8f0"/><stop offset="0.82" stop-color="#0a74cc"/><stop offset="1" stop-color="#0a74cc"/></linearGradient></defs><rect x="0" y="0" width="84" height="83" fill="url(#sg)"/><path d="M0 0 H30 L18 30 H0 Z" fill="#f03a2a" opacity=".0"/><path d="M28 0 V83 M56 0 V83 M0 28 H84 M0 56 H84" stroke="#b8c0b8" stroke-width="2" fill="none" opacity=".8"/><rect x="1" y="1" width="82" height="81" fill="none" stroke="#9aa" stroke-width="2" opacity=".7"/></svg>
<span class="t" style="left:449.66px;top:865.07px;font-size:33px;color:#101010;transform:scaleX(0.9018);">Sounding Grid</span>
<svg class="a" style="left:470px;top:930px" width="150" height="120" viewBox="470 930 150 120" ><defs><linearGradient id="dw" x1="0" y1="0" x2="1" y2="0"><stop offset="0" stop-color="#1c3fb4"/><stop offset="0.24" stop-color="#1c3fb4"/><stop offset="0.36" stop-color="#8cc458"/><stop offset="0.62" stop-color="#86ba4e"/><stop offset="0.8" stop-color="#141414"/><stop offset="1" stop-color="#141414"/></linearGradient></defs><path d="M529.5 964.5 Q539.75 956.5 548 954.5 Q557 955.5 562 962 T574 973.5" fill="none" stroke="url(#dw)" stroke-width="5.4" stroke-linecap="round"/><path d="M521.5 977.5 Q533.5 969 543.5 966.5 Q552.5 967.5 560.25 977 T575 991.5" fill="none" stroke="url(#dw)" stroke-width="5.4" stroke-linecap="round"/><path d="M512.5 991 Q527.25 982 540 979 Q549 980 558.5 992 T575 1009" fill="none" stroke="url(#dw)" stroke-width="5.4" stroke-linecap="round"/><path d="M504 1006.5 Q520 995 534 989.5 Q543 990.5 555.75 1006.5 T575.5 1027.5" fill="none" stroke="url(#dw)" stroke-width="5.4" stroke-linecap="round"/></svg>
<span class="t" style="left:482.52px;top:1047.07px;font-size:33px;color:#101010;transform:scaleX(0.9178);">DTM File</span>
<div class="a" style="left:394px;top:1119px;width:291px;height:176px;background:#f3f3f3;box-shadow:inset 2px 2px 0 #7c7c7c,inset -2px -2px 0 #fff;"></div>
<svg class="a" style="left:490px;top:1125px" width="100" height="95" viewBox="490 1125 100 95" ><path d="M519 1163 V1174 M552 1161 L532 1181 M540 1194 H549" stroke="#86c46a" stroke-width="2" fill="none"/><rect x="505" y="1134.5" width="28" height="28" fill="#eef5fc" stroke="#4a88bc" stroke-width="3"/><circle cx="564" cy="1148.5" r="15.5" fill="#f6f3f4" stroke="#dc5466" stroke-width="3.4"/><path d="M539.9 1191.94 L539.9 1196.06 L534.31 1198.64 L533.11 1201.54 L535.23 1207.32 L532.32 1210.23 L526.54 1208.11 L523.64 1209.31 L521.06 1214.9 L516.94 1214.9 L514.36 1209.31 L511.46 1208.11 L505.68 1210.23 L502.77 1207.32 L504.89 1201.54 L503.69 1198.64 L498.1 1196.06 L498.1 1191.94 L503.69 1189.36 L504.89 1186.46 L502.77 1180.68 L505.68 1177.77 L511.46 1179.89 L514.36 1178.69 L516.94 1173.1 L521.06 1173.1 L523.64 1178.69 L526.54 1179.89 L532.32 1177.77 L535.23 1180.68 L533.11 1186.46 L534.31 1189.36 Z M508 1194 a11 11 0 1 0 22 0 a11 11 0 1 0 -22 0 Z" fill="#141414" fill-rule="evenodd"/><rect x="550.5" y="1177" width="13.5" height="36" fill="#eaf4fc" stroke="#4a88bc" stroke-width="3"/><rect x="570" y="1177" width="13.5" height="36" fill="#eaf4fc" stroke="#4a88bc" stroke-width="3"/></svg>
<span class="t" style="left:495.52px;top:1227.72px;font-size:34px;color:#101010;transform:scaleX(0.8709);">Control</span>
<div class="a" style="left:637px;top:1239px;width:47px;height:46px;background:#f1f1f1;box-shadow:inset -3px -3px 0 #8c8c8c,inset 2px 2px 0 #fff;"></div>
<svg class="a" style="left:648.5px;top:1256.5px;" width="22" height="11" viewBox="0 0 22 11" ><path d="M0 0 H22 L11 11 Z" fill="#000"/></svg>
<div class="a" style="left:381px;top:1297px;width:317px;height:4px;background:#fdfdfd;"></div>
<div class="a b" style="left:381px;top:1302px;width:317px;height:54px;background:#f3f3f4;box-shadow:inset -3px -3px 0 #767676,inset 2px 2px 0 #fdfdfd;"></div>
<span class="t" style="left:499.66px;top:1312.72px;font-size:34px;color:#101010;transform:scaleX(0.8400);">Fixing</span>
<div class="a b" style="left:381px;top:1358px;width:317px;height:54px;background:#f3f3f4;box-shadow:inset -3px -3px 0 #767676,inset 2px 2px 0 #fdfdfd;"></div>
<span class="t" style="left:465.03px;top:1369.22px;font-size:34px;color:#101010;transform:scaleX(0.8845);">Bargetrack</span>
<div class="a b" style="left:381px;top:1414px;width:317px;height:55px;background:#f3f3f4;box-shadow:inset -3px -3px 0 #767676,inset 2px 2px 0 #fdfdfd;"></div>
<span class="t" style="left:468.57px;top:1425.72px;font-size:34px;color:#101010;transform:scaleX(0.8714);">Monitoring</span>
<div class="a" style="left:720px;top:274px;width:1602px;height:1198px;background:#f1f1f2;box-shadow:inset 4px 4px 0 #767676,inset -2px -2px 0 #fdfdfd;"></div>
<div class="a g" style="left:751px;top:325px;width:1548px;height:162px;border:2px solid #a4a4a4;box-sizing:border-box;box-shadow:2px 2px 0 #fdfdfd,inset 2px 2px 0 #fdfdfd;"></div>
<div class="a" style="left:770px;top:313px;width:414px;height:26px;background:#f1f1f2;"></div>
<span class="t" style="left:775.65px;top:308.22px;font-size:34px;color:#101010;transform:scaleX(0.8797);">Storage database split options</span>
<div class="a" style="left:775px;top:354px;width:1501px;height:106px;background:#f4f4f4;"></div>
<div class="a" style="left:775px;top:354px;width:1501px;height:4px;background:#6f6f6f;"></div>
<div class="a" style="left:775px;top:354px;width:3px;height:106px;background:#6f6f6f;"></div>
<div class="a" style="left:2274px;top:358px;width:2px;height:102px;background:#fdfdfd;"></div>
<div class="a" style="left:778px;top:458px;width:1498px;height:2px;background:#fdfdfd;"></div>
<div class="a" style="left:778px;top:358px;width:275px;height:51px;background:#fffee6;"></div>
<div class="a" style="left:1053px;top:358px;width:2px;height:51px;background:#a8a8a8;"></div>
<div class="a" style="left:1055px;top:358px;width:1219px;height:51px;background:#fff;"></div>
<div class="a" style="left:778px;top:407px;width:1496px;height:2px;background:#a8a8a8;"></div>
<span class="t" style="left:784.43px;top:364.87px;font-size:35px;color:#101010;">Split Method:</span>
<span class="t" style="left:1537.4px;top:364.87px;font-size:35px;color:#101010;transform:scaleX(0.9056);">DTM File Size</span>
<div class="a" style="left:2223px;top:359px;width:50px;height:48px;background:#f1f1f1;box-shadow:inset -3px -3px 0 #8c8c8c,inset 2px 2px 0 #fff;"></div>
<svg class="a" style="left:2236px;top:377.5px;" width="22" height="11" viewBox="0 0 22 11" ><path d="M0 0 H22 L11 11 Z" fill="#000"/></svg>
<div class="a" style="left:778px;top:409px;width:275px;height:51px;background:#fffee6;"></div>
<div class="a" style="left:1053px;top:409px;width:2px;height:51px;background:#a8a8a8;"></div>
<div class="a" style="left:1055px;top:409px;width:1219px;height:51px;background:#fff;"></div>
<div class="a" style="left:778px;top:458px;width:1496px;height:2px;background:#a8a8a8;"></div>
<span class="t" style="left:783.46px;top:415.87px;font-size:35px;color:#101010;transform:scaleX(0.8848);">File Size Limit:</span>
<span class="t" style="left:1582.41px;top:415.87px;font-size:35px;color:#101010;transform:scaleX(0.9749);">100.0 [MB]</span>
<div class="a g" style="left:751px;top:517px;width:1548px;height:218px;border:2px solid #a4a4a4;box-sizing:border-box;box-shadow:2px 2px 0 #fdfdfd,inset 2px 2px 0 #fdfdfd;"></div>
<div class="a" style="left:770px;top:505px;width:342px;height:26px;background:#f1f1f2;"></div>
<span class="t" style="left:776.94px;top:500.22px;font-size:34px;color:#101010;transform:scaleX(0.8818);">Automatic Line Selection</span>
<div class="a" style="left:775px;top:546px;width:1501px;height:166px;background:#f4f4f4;"></div>
<div class="a" style="left:775px;top:546px;width:1501px;height:4px;background:#6f6f6f;"></div>
<div class="a" style="left:775px;top:546px;width:3px;height:166px;background:#6f6f6f;"></div>
<div class="a" style="left:2274px;top:550px;width:2px;height:162px;background:#fdfdfd;"></div>
<div class="a" style="left:778px;top:710px;width:1498px;height:2px;background:#fdfdfd;"></div>
<div class="a" style="left:778px;top:550px;width:275px;height:50px;background:#fff;"></div>
<div class="a" style="left:1053px;top:550px;width:2px;height:50px;background:#a8a8a8;"></div>
<div class="a" style="left:1055px;top:550px;width:1219px;height:50px;background:#fff;"></div>
<div class="a" style="left:778px;top:598px;width:1496px;height:2px;background:#a8a8a8;"></div>
<span class="t" style="left:784.55px;top:556.87px;font-size:35px;color:#101010;transform:scaleX(0.9222);">Selection Method:</span>
<span class="t" style="left:1577.37px;top:556.87px;font-size:35px;color:#101010;transform:scaleX(0.9153);">Planning</span>
<div class="a" style="left:2223px;top:551px;width:50px;height:47px;background:#f1f1f1;box-shadow:inset -3px -3px 0 #8c8c8c,inset 2px 2px 0 #fff;"></div>
<svg class="a" style="left:2236px;top:569px;" width="22" height="11" viewBox="0 0 22 11" ><path d="M0 0 H22 L11 11 Z" fill="#000"/></svg>
<div class="a" style="left:778px;top:600px;width:275px;height:52px;background:#fff;"></div>
<div class="a" style="left:1053px;top:600px;width:2px;height:52px;background:#a8a8a8;"></div>
<div class="a" style="left:1055px;top:600px;width:1219px;height:52px;background:#fff;"></div>
<div class="a" style="left:778px;top:650px;width:1496px;height:2px;background:#a8a8a8;"></div>
<span class="t" style="left:783.47px;top:606.87px;font-size:35px;color:#101010;transform:scaleX(0.8828);">Line Search Mode:</span>
<span class="t" style="left:1582.36px;top:606.87px;font-size:35px;color:#101010;transform:scaleX(0.9208);">Nearest</span>
<div class="a" style="left:2223px;top:601px;width:50px;height:49px;background:#f1f1f1;box-shadow:inset -3px -3px 0 #8c8c8c,inset 2px 2px 0 #fff;"></div>
<svg class="a" style="left:2236px;top:620px;" width="22" height="11" viewBox="0 0 22 11" ><path d="M0 0 H22 L11 11 Z" fill="#000"/></svg>
<div class="a g" style="left:751px;top:767px;width:1548px;height:437px;border:2px solid #a4a4a4;box-sizing:border-box;box-shadow:2px 2px 0 #fdfdfd,inset 2px 2px 0 #fdfdfd;"></div>
<div class="a" style="left:770px;top:755px;width:397px;height:26px;background:#f1f1f2;"></div>
<span class="t" style="left:776.94px;top:750.22px;font-size:34px;color:#101010;transform:scaleX(0.8687);">Automatic Recording Options</span>
<div class="a" style="left:775px;top:801px;width:1501px;height:386px;background:#f4f4f4;"></div>
<div class="a" style="left:775px;top:801px;width:1501px;height:4px;background:#6f6f6f;"></div>
<div class="a" style="left:775px;top:801px;width:3px;height:386px;background:#6f6f6f;"></div>
<div class="a" style="left:2274px;top:805px;width:2px;height:382px;background:#fdfdfd;"></div>
<div class="a" style="left:778px;top:1185px;width:1498px;height:2px;background:#fdfdfd;"></div>
<div class="a" style="left:778px;top:805px;width:620px;height:48px;background:#fff;"></div>
<div class="a" style="left:1398px;top:805px;width:2px;height:48px;background:#a8a8a8;"></div>
<div class="a" style="left:1400px;top:805px;width:874px;height:48px;background:#fff;"></div>
<div class="a" style="left:778px;top:851px;width:1496px;height:2px;background:#a8a8a8;"></div>
<span class="t" style="left:792.93px;top:811.87px;font-size:35px;color:#101010;">Auto Recording Method:</span>
<span class="t" style="left:1730.94px;top:811.87px;font-size:35px;color:#101010;transform:scaleX(0.8916);">Area Based</span>
<div class="a" style="left:2223px;top:806px;width:50px;height:45px;background:#f1f1f1;box-shadow:inset -3px -3px 0 #8c8c8c,inset 2px 2px 0 #fff;"></div>
<svg class="a" style="left:2236px;top:823px;" width="22" height="11" viewBox="0 0 22 11" ><path d="M0 0 H22 L11 11 Z" fill="#000"/></svg>
<div class="a" style="left:778px;top:853px;width:620px;height:53px;background:#fff;"></div>
<div class="a" style="left:1398px;top:853px;width:2px;height:53px;background:#a8a8a8;"></div>
<div class="a" style="left:1400px;top:853px;width:874px;height:53px;background:#fff;"></div>
<div class="a" style="left:778px;top:904px;width:1496px;height:2px;background:#a8a8a8;"></div>
<span class="t" style="left:829.93px;top:859.87px;font-size:35px;color:#101010;transform:scaleX(0.9338);">Active Area Rules:</span>
<div class="a" style="left:1400px;top:853px;width:813px;height:53px;background:#0080d8;box-shadow:inset 0 0 0 2px #a8d8f8;"></div>
<div class="a" style="left:2216px;top:855px;width:57px;height:49px;background:#f1f1f1;box-shadow:inset -3px 0 0 #1c1c1c,inset 0 -4px 0 #8a8a8a,inset 4px 3px 0 #dcecfb;"></div>
<span class="t" style="left:2230.15px;top:862.72px;font-size:34px;color:#222;transform:scaleX(1.0826);">...</span>
<div class="a g" style="left:748px;top:1235px;width:1548px;height:211px;border:2px solid #a4a4a4;box-sizing:border-box;box-shadow:2px 2px 0 #fdfdfd,inset 2px 2px 0 #fdfdfd;"></div>
<div class="a" style="left:770px;top:1223px;width:567px;height:26px;background:#f1f1f2;"></div>
<span class="t" style="left:776.94px;top:1218.22px;font-size:34px;color:#101010;transform:scaleX(0.9139);">Automatic Transfer of Storage Database</span>
<div class="a" style="left:772px;top:1267px;width:1502px;height:148px;background:#f2f2f3;"></div>
<div class="a" style="left:772px;top:1267px;width:1502px;height:4px;background:#6f6f6f;"></div>
<div class="a" style="left:770px;top:1267px;width:3px;height:148px;background:#6f6f6f;"></div>
<div class="a" style="left:778px;top:1271px;width:275px;height:50px;background:#fff;"></div>
<div class="a" style="left:1053px;top:1271px;width:2px;height:50px;background:#a8a8a8;"></div>
<div class="a" style="left:1055px;top:1271px;width:1165px;height:50px;background:#fff;"></div>
<div class="a" style="left:778px;top:1319px;width:1442px;height:2px;background:#a8a8a8;"></div>
<span class="t" style="left:785.3px;top:1277.87px;font-size:35px;color:#101010;transform:scaleX(0.9149);">Transfer Method:</span>
<span class="t" style="left:1587.47px;top:1277.87px;font-size:35px;color:#101010;transform:scaleX(1.0190);">[None]</span>
<div class="a" style="left:2170px;top:1272px;width:50px;height:47px;background:#f1f1f1;box-shadow:inset -3px -3px 0 #8c8c8c,inset 2px 2px 0 #fff;"></div>
<svg class="a" style="left:2183px;top:1290px;" width="22" height="11" viewBox="0 0 22 11" ><path d="M0 0 H22 L11 11 Z" fill="#000"/></svg>
<div class="a" style="left:773px;top:1321px;width:1447px;height:51px;background:#f1f1f2;"></div>
<div class="a" style="left:1118px;top:1321px;width:2px;height:94px;background:#a8a8a8;"></div>
<span class="t" style="left:781.28px;top:1329.03px;font-size:36px;color:#6c6c6c;transform:scaleX(0.9031);">Transfer Db Folder:</span>
<div class="a" style="left:773px;top:1371px;width:1447px;height:13px;background:#c6ccd8;"></div>
<div class="a" style="left:773px;top:1384px;width:1447px;height:31px;background:#f6f6f6;"></div>
<div class="a" style="left:773px;top:1384px;width:1447px;height:31px;overflow:hidden;"><span class="t" style="left:5.95px;top:7.53px;font-size:36px;color:#6c6c6c;transform:scaleX(0.9199);">Include DTM Files:</span>
<span class="t" style="left:845.95px;top:7.53px;font-size:36px;color:#6c6c6c;transform:scaleX(1.0342);">No</span>
</div>
<div class="a" style="left:2170px;top:1386px;width:50px;height:29px;background:#f1f1f1;"></div>
<svg class="a" style="left:2182px;top:1403px;" width="22" height="11" viewBox="0 0 22 11" ><path d="M0 0 H22 L11 11 Z" fill="#a4a4a4"/></svg>
<div class="a" style="left:2219px;top:1271px;width:3px;height:144px;background:#7c7c7c;"></div>
<div class="a" style="left:2222px;top:1271px;width:52px;height:144px;background:#f3f3f1;"></div>
<svg class="a" style="left:2236px;top:1288px;" width="24" height="16" viewBox="0 0 24 16" ><path d="M2 14 L12 4 L22 14" fill="none" stroke="#5c5c5c" stroke-width="4.5"/></svg>
<svg class="a" style="left:2236px;top:1380px;" width="24" height="16" viewBox="0 0 24 16" ><path d="M2 2 L12 12 L22 2" fill="none" stroke="#5c5c5c" stroke-width="4.5"/></svg>
<div class="a b" style="left:759px;top:1505px;width:211px;height:63px;background:#f2f2f2;box-shadow:inset -3px -3px 0 #8a8a8a,inset 2px 2px 0 #fff;"></div>
<span class="t" style="left:843.64px;top:1517.07px;font-size:33px;color:#101010;transform:scaleX(0.8739);">OK</span>
<div class="a b" style="left:1028px;top:1505px;width:211px;height:63px;background:#f2f2f2;box-shadow:inset -3px -3px 0 #8a8a8a,inset 2px 2px 0 #fff;"></div>
<span class="t" style="left:1085.95px;top:1517.07px;font-size:33px;color:#101010;transform:scaleX(0.9403);">Cancel</span>
<svg class="a" style="left:2196px;top:1553px;" width="34" height="34" viewBox="0 0 34 34" ><path d="M2 32 L32 2 M12 32 L32 12 M22 32 L32 22" stroke="#a2a2a2" stroke-width="2.4" fill="none"/></svg>
</div>
<div id="area-rules-dialog">
<div class="a" style="left:691px;top:426px;width:1318px;height:897px;background:rgba(242,242,243,.95);box-shadow:0 6px 30px rgba(0,0,0,.42),0 0 0 1px rgba(110,110,110,.6);"></div>
<div class="a" style="left:691px;top:426px;width:1318px;height:79px;background:rgba(255,255,255,.75);"></div>
<svg class="a" style="left:716px;top:445px;" width="42" height="42" viewBox="0 0 42 42" ><circle cx="21" cy="21" r="21" fill="#f06a7c"/><path d="M14.07 13.44 A10.5 10.5 0 1 0 27.93 13.44" fill="none" stroke="#fff" stroke-width="3.36" stroke-linecap="round"/><path d="M21 7.98 V19.95" stroke="#fff" stroke-width="3.36" stroke-linecap="round"/></svg>
<span class="t" style="left:771.26px;top:450.37px;font-size:35px;color:#3c3c3c;transform:scaleX(0.9540);">Define your Auto Recording Area Rules</span>
<svg class="a" style="left:1952px;top:452px;" width="29" height="29" viewBox="0 0 29 29" ><path d="M1 1 L28 28 M28 1 L1 28" stroke="#4c4c4c" stroke-width="2.6" fill="none"/></svg>
<div class="a" style="left:745px;top:541px;width:1208px;height:5px;background:#4c4c4c;"></div>
<div class="a" style="left:745px;top:541px;width:4px;height:405px;background:#767676;"></div>
<div class="a" style="left:749px;top:945px;width:1206px;height:3px;background:rgba(255,255,255,.55);"></div>
<div class="a" style="left:1953px;top:546px;width:3px;height:400px;background:rgba(255,255,255,.55);"></div>
<div class="a" style="left:749px;top:546px;width:1204px;height:47px;background:rgba(243,243,243,.8);"></div>
<div class="a" style="left:800px;top:546px;width:2.5px;height:97px;background:#a4a4a4;"></div>
<div class="a" style="left:1182px;top:546px;width:2.5px;height:97px;background:#a4a4a4;"></div>
<div class="a" style="left:1566px;top:546px;width:2.5px;height:97px;background:#a4a4a4;"></div>
<div class="a" style="left:1950px;top:546px;width:2.5px;height:97px;background:#a4a4a4;"></div>
<div class="a" style="left:749px;top:592px;width:1204px;height:2.5px;background:#a4a4a4;"></div>
<div class="a" style="left:749px;top:642px;width:1204px;height:2.5px;background:#a4a4a4;"></div>
<span class="t" style="left:912.19px;top:551.37px;font-size:35px;color:#2c2c2c;transform:scaleX(0.9779);">Recording</span>
<span class="t" style="left:1332.36px;top:551.37px;font-size:35px;color:#2c2c2c;transform:scaleX(0.9827);">When</span>
<span class="t" style="left:1727.94px;top:551.37px;font-size:35px;color:#2c2c2c;transform:scaleX(0.8797);">Area</span>
<span class="t" style="left:765.71px;top:602.37px;font-size:35px;color:#2c2c2c;transform:scaleX(0.8598);">1</span>
<div class="a" style="left:802px;top:594.5px;width:380px;height:48px;background:#fffee8;"></div>
<div class="a" style="left:1131px;top:595px;width:51px;height:47px;background:#f1f1f1;box-shadow:inset -3px -3px 0 #8c8c8c,inset 2px 2px 0 #fff;"></div>
<svg class="a" style="left:1144.5px;top:613px;" width="22" height="11" viewBox="0 0 22 11" ><path d="M0 0 H22 L11 11 Z" fill="#000"/></svg>
<div class="a" style="left:1184px;top:594.5px;width:382px;height:48px;background:#fffee8;"></div>
<div class="a" style="left:1515px;top:595px;width:51px;height:47px;background:#f1f1f1;box-shadow:inset -3px -3px 0 #8c8c8c,inset 2px 2px 0 #fff;"></div>
<svg class="a" style="left:1528.5px;top:613px;" width="22" height="11" viewBox="0 0 22 11" ><path d="M0 0 H22 L11 11 Z" fill="#000"/></svg>
<div class="a" style="left:1568px;top:594.5px;width:382px;height:48px;background:#fffee8;"></div>
<div class="a" style="left:1899px;top:595px;width:51px;height:47px;background:#f1f1f1;box-shadow:inset -3px -3px 0 #8c8c8c,inset 2px 2px 0 #fff;"></div>
<svg class="a" style="left:1912.5px;top:613px;" width="22" height="11" viewBox="0 0 22 11" ><path d="M0 0 H22 L11 11 Z" fill="#000"/></svg>
<span class="t" style="left:931.56px;top:602.37px;font-size:35px;color:#1c1c1c;transform:scaleX(0.9154);">Start</span>
<span class="t" style="left:1300.82px;top:602.37px;font-size:35px;color:#1c1c1c;transform:scaleX(0.9874);">Inside</span>
<span class="t" style="left:1600.13px;top:602.37px;font-size:35px;color:#1c1c1c;transform:scaleX(0.9215);">survey_area_north</span>
<span class="t" style="left:743.15px;top:984.61px;font-size:30px;color:#3a3a3a;transform:scaleX(1.0258);-webkit-text-stroke:.5px #3a3a3a;">- Order is important: the last rule will overrule a previous defined rule</span>
<span class="t" style="left:743.17px;top:1021.11px;font-size:30px;color:#3a3a3a;transform:scaleX(1.0092);-webkit-text-stroke:.5px #3a3a3a;">- Areas are listed when being part of the Session Setup Line Planning</span>
<span class="t" style="left:743.19px;top:1057.61px;font-size:30px;color:#3a3a3a;transform:scaleX(0.9937);-webkit-text-stroke:.5px #3a3a3a;">- Please make sure the rules make sense because every combination is possible</span>
<div class="a b" style="left:745px;top:1223px;width:149px;height:63px;background:rgba(242,242,242,.85);box-shadow:inset -3px -3px 0 #8e8e8e,inset 2px 2px 0 #fff;"></div>
<span class="t" style="left:789.94px;top:1236.57px;font-size:33px;color:#3a3a3a;transform:scaleX(0.9376);-webkit-text-stroke:.6px #3a3a3a;">Add</span>
<div class="a b" style="left:923px;top:1223px;width:149px;height:63px;background:rgba(242,242,242,.85);box-shadow:inset -3px -3px 0 #8e8e8e,inset 2px 2px 0 #fff;"></div>
<span class="t" style="left:936.52px;top:1236.57px;font-size:33px;color:#b4b4b4;transform:scaleX(0.9180);text-shadow:1px 1px 0 #fff;">Remove</span>
<div class="a b" style="left:1100px;top:1223px;width:149px;height:63px;background:rgba(242,242,242,.85);box-shadow:inset -3px -3px 0 #8e8e8e,inset 2px 2px 0 #fff;"></div>
<span class="t" style="left:1149.54px;top:1236.57px;font-size:33px;color:#b4b4b4;transform:scaleX(0.9666);text-shadow:1px 1px 0 #fff;">Up</span>
<div class="a b" style="left:1277px;top:1223px;width:150px;height:63px;background:rgba(242,242,242,.85);box-shadow:inset -3px -3px 0 #8e8e8e,inset 2px 2px 0 #fff;"></div>
<span class="t" style="left:1307.86px;top:1236.57px;font-size:33px;color:#b4b4b4;transform:scaleX(0.9741);text-shadow:1px 1px 0 #fff;">Down</span>
<div class="a b" style="left:1530px;top:1223px;width:210px;height:63px;background:rgba(242,242,242,.85);box-shadow:inset 0 0 0 2px #8a8a8a,inset -5px -5px 0 #8e8e8e,inset 4px 4px 0 #fff;"></div>
<span class="t" style="left:1611.64px;top:1236.57px;font-size:33px;color:#3a3a3a;transform:scaleX(0.8739);-webkit-text-stroke:.6px #3a3a3a;">OK</span>
<div class="a b" style="left:1759px;top:1223px;width:209px;height:63px;background:rgba(242,242,242,.85);box-shadow:inset -3px -3px 0 #8e8e8e,inset 2px 2px 0 #fff;"></div>
<span class="t" style="left:1813.99px;top:1236.57px;font-size:33px;color:#3a3a3a;transform:scaleX(0.9151);-webkit-text-stroke:.6px #3a3a3a;">Cancel</span>
<svg class="a" style="left:1972px;top:1286px;" width="36" height="36" viewBox="0 0 36 36" ><path d="M2 34 L34 2 M12 34 L34 12 M22 34 L34 22" stroke="#a2a2a2" stroke-width="2.4" fill="none"/></svg>
</div>
<svg class="a" id="cursor" style="left:2230px;top:870px" width="80" height="100" viewBox="2230 870 80 100"><path d="M2248.5 884 V938 L2260 928.5 L2273 955.5 L2283.5 951 L2271.5 925.5 L2287 921.5 Z" fill="#fff" stroke="#000" stroke-width="5" stroke-linejoin="miter" stroke-miterlimit="6"/></svg>
</div>
</body>
</html>
